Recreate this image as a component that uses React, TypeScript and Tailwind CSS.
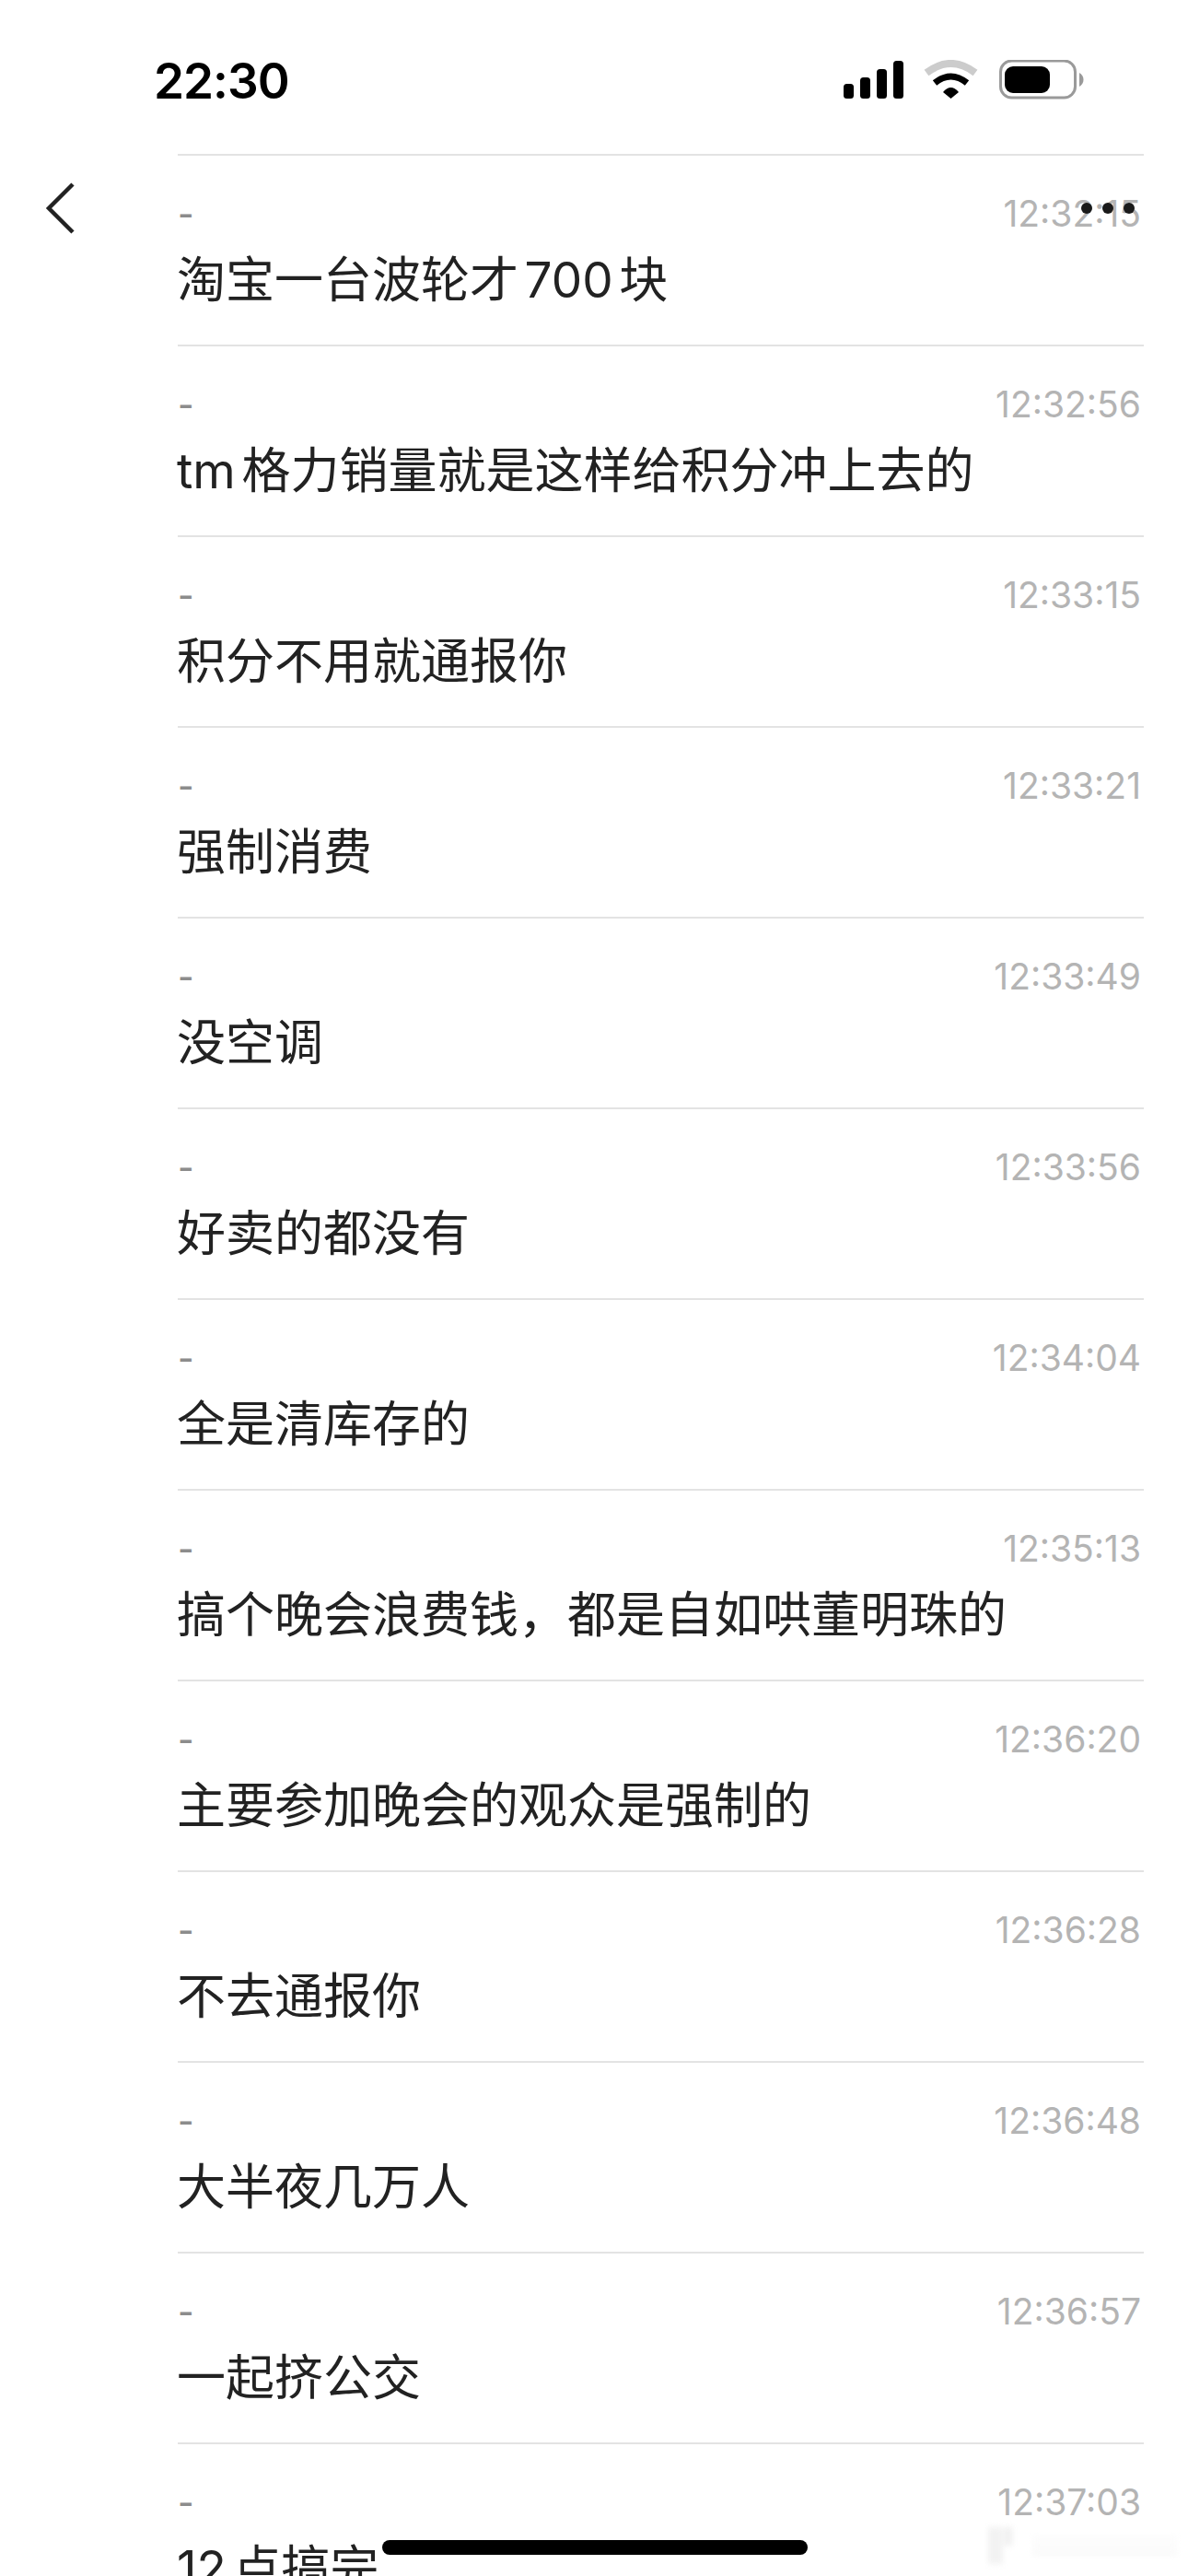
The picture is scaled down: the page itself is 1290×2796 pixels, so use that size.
const rows = [
  { text: "淘宝一台波轮才700块", time: "12:32:15" },
  { text: "tm格力销量就是这样给积分冲上去的", time: "12:32:56" },
  { text: "积分不用就通报你", time: "12:33:15" },
  { text: "强制消费", time: "12:33:21" },
  { text: "没空调", time: "12:33:49" },
  { text: "好卖的都没有", time: "12:33:56" },
  { text: "全是清库存的", time: "12:34:04" },
  { text: "搞个晚会浪费钱，都是自如哄董明珠的", time: "12:35:13" },
  { text: "主要参加晚会的观众是强制的", time: "12:36:20" },
  { text: "不去通报你", time: "12:36:28" },
  { text: "大半夜几万人", time: "12:36:48" },
  { text: "一起挤公交", time: "12:36:57" },
  { text: "12点搞完", time: "12:37:03" },
];

function StatusIcons() {
  return (
    <svg width="264" height="44" viewBox="0 0 264 44" fill="none">
      <rect x="0" y="26" width="11" height="16" rx="3.5" fill="#000" />
      <rect x="18" y="19" width="11" height="23" rx="3.5" fill="#000" />
      <rect x="36" y="10" width="11" height="32" rx="3.5" fill="#000" />
      <rect x="54" y="1" width="11" height="41" rx="3.5" fill="#000" />
      <path d="M90 14 Q116.5 -6 143 14" stroke="#cccccc" strokeWidth="8" />
      <path d="M99 25 Q116.5 11 134 25" stroke="#000" strokeWidth="7" />
      <path d="M108 35 Q116.5 25 125 35 L116.5 42 Z" fill="#000" />
      <rect x="170.5" y="1" width="81" height="40" rx="12" stroke="#9a9a9a" strokeWidth="3" />
      <rect x="175" y="7" width="49" height="29" rx="9" fill="#000" />
      <path d="M256 14 C262 17 262 26 256 29 Z" fill="#9a9a9a" />
    </svg>
  );
}

export default function App() {
  return (
    <div className="relative h-[2796px] w-[1290px] overflow-hidden bg-white font-['Inter','Noto_Sans_CJK_SC',sans-serif]">
      {/* Status bar */}
      <div className="flex h-[167px] items-start justify-between pl-[167px] pr-[110px] pt-[58px]">
        <span className="text-[53px] font-semibold leading-[60px] tracking-[-1px] text-black">
          22:30
        </span>
        <div className="pt-[7px]">
          <StatusIcons />
        </div>
      </div>

      {/* Messages */}
      <div className="ml-[193px] mr-[48px]">
        {rows.map((row) => (
          <div key={row.time} className="h-[207px] border-t-2 border-[#e3e3e3]">
            <div className="flex items-start justify-between pr-[3px] pt-[41px]">
              <span className="text-[38px] font-medium leading-[44px] text-[#8c8c8c]">-</span>
              <span className="text-[39px] leading-[44px] text-[#b4b4b4]">{row.time}</span>
            </div>
            <p className="ml-[-1px] mt-[14px] whitespace-nowrap text-[53px] leading-[72px] text-[#222222] [text-autospace:normal]">
              {row.text}
            </p>
          </div>
        ))}
      </div>

      {/* Floating nav over the list */}
      <svg className="absolute left-[48px] top-[195px]" width="36" height="62" viewBox="0 0 36 62" fill="none">
        <path d="M31 5 L5 31 L31 57" stroke="#222222" strokeWidth="4.5" />
      </svg>
      <div className="absolute left-[1174px] top-[220px] flex gap-[11px]">
        <div className="h-[12px] w-[12px] rounded-full bg-[#1a1a1a]" />
        <div className="h-[12px] w-[12px] rounded-full bg-[#1a1a1a]" />
        <div className="h-[12px] w-[12px] rounded-full bg-[#1a1a1a]" />
      </div>

      {/* Blurred-out watermark */}
      <div className="absolute left-[1073px] top-[2743px] flex h-[40px] w-[205px] gap-[2px] blur-[3px]">
        <div className="h-full w-[16px] bg-[#f2f2f2]" />
        <div className="h-[20px] w-[8px] bg-[#eeeeee]" />
        <div className="flex flex-1 flex-col justify-center gap-[6px] pl-[20px]">
          <div className="h-[2px] bg-[#f6f6f6]" />
          <div className="h-[2px] bg-[#f2f2f2]" />
          <div className="h-[2px] bg-[#eeeeee]" />
        </div>
      </div>

      {/* Home indicator */}
      <div className="absolute left-[415px] top-[2757px] h-[16px] w-[462px] rounded-full bg-black" />
    </div>
  );
}
